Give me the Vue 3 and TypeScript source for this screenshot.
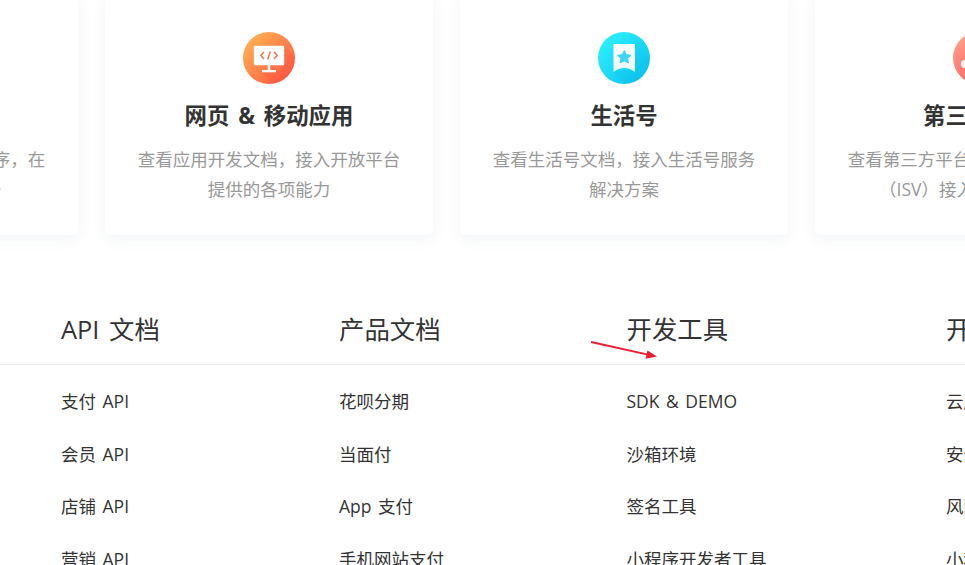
<script setup lang="ts">
interface Card { id: string; title: string; lines: string[] }
interface Col { title: string; items: string[] }
const cards: Card[] = [
  { id: 'mini', title: '小程序', lines: ['查看小程序文档\uFF0C开发小程序\uFF0C在', '支付宝内提供各项服务'] },
  { id: 'web', title: '网页 & 移动应用', lines: ['查看应用开发文档\uFF0C接入开放平台', '提供的各项能力'] },
  { id: 'life', title: '生活号', lines: ['查看生活号文档\uFF0C接入生活号服务', '解决方案'] },
  { id: 'isv', title: '第三方应用', lines: ['查看第三方平台文档\uFF0C帮助开发者', '\uFF08ISV\uFF09接入平台各项能力'] },
]
const cols: Col[] = [
  { title: 'API 文档', items: ['支付 API', '会员 API', '店铺 API', '营销 API'] },
  { title: '产品文档', items: ['花呗分期', '当面付', 'App 支付', '手机网站支付'] },
  { title: '开发工具', items: ['SDK & DEMO', '沙箱环境', '签名工具', '小程序开发者工具'] },
  { title: '开放能力', items: ['云服务', '安全中心', '风险控制', '小程序'] },
]
</script>

<template>
  <div class="page">
    <section class="cards">
      <article v-for="c in cards" :key="c.id" class="card">
        <svg class="icon" viewBox="0 0 52 52" width="52" height="52">
          <defs>
            <linearGradient id="g-web" x1="0" y1="0" x2="1" y2="1">
              <stop offset="0.1" stop-color="#ffb14f" />
              <stop offset="0.9" stop-color="#ff5a48" />
            </linearGradient>
            <linearGradient id="g-life" x1="0" y1="0" x2="1" y2="1">
              <stop offset="0.1" stop-color="#2df0ff" />
              <stop offset="0.9" stop-color="#0cc4ee" />
            </linearGradient>
            <linearGradient id="g-isv" x1="0" y1="0" x2="1" y2="1">
              <stop offset="0.1" stop-color="#ff9e8c" />
              <stop offset="0.9" stop-color="#ff5252" />
            </linearGradient>
            <linearGradient id="g-mini" x1="0" y1="0" x2="1" y2="1">
              <stop offset="0.1" stop-color="#6fb6ff" />
              <stop offset="0.9" stop-color="#2f7dff" />
            </linearGradient>
            <linearGradient id="g-mark" x1="0" y1="0" x2="0" y2="1">
              <stop offset="0.55" stop-color="#fff" />
              <stop offset="1" stop-color="#e2f7fd" />
            </linearGradient>
            <clipPath id="disc"><circle cx="26" cy="26" r="26" /></clipPath>
          </defs>
          <circle cx="26" cy="26" r="26" :fill="`url(#g-${c.id})`" />
          <template v-if="c.id === 'web'">
            <polygon clip-path="url(#disc)" points="40.8,14 64,37 64,64 42,64 19,41 33,41 40.8,34" fill="#e63c28" opacity="0.16" />
            <path d="M10.8 15.2 A1.5 1.5 0 0 1 12.3 13.7 H39.7 A1.5 1.5 0 0 1 41.2 15.2 V31.7 A1.5 1.5 0 0 1 39.7 33.2 H12.3 A1.5 1.5 0 0 1 10.8 31.7 Z" fill="#fff" />
            <rect x="24.8" y="33" width="2.4" height="5.5" fill="#fff" />
            <rect x="19" y="38" width="14" height="2.2" rx="0.6" fill="#fff" />
            <path d="M21 20 L17.8 23.5 L21 27 M31 20 L34.2 23.5 L31 27 M27.3 19.5 L24.7 27.5" fill="none" stroke="#ff7448" stroke-width="1.5" />
          </template>
          <template v-else-if="c.id === 'life'">
            <polygon clip-path="url(#disc)" points="37,12 64,39 64,64 40,64 15.5,40 37,38" fill="#0082c8" opacity="0.06" />
            <path d="M15.5 12 H37 V40 Q26.2 32 15.5 40 Z" fill="url(#g-mark)" />
            <polygon points="26.3,18.5 28.4,22.6 33,23.3 29.7,26.5 30.5,31 26.3,28.9 22.1,31 22.9,26.5 19.6,23.3 24.2,22.6" fill="#3fd6f5" stroke="#3fd6f5" stroke-width="1" stroke-linejoin="round" />
          </template>
          <template v-else-if="c.id === 'isv'">
            <path d="M12 32 L26 16 L40 32 Z" fill="none" stroke="#fff" stroke-width="2" />
            <circle cx="12" cy="32" r="4" fill="#fff" />
            <circle cx="40" cy="32" r="4" fill="#fff" />
            <circle cx="26" cy="16" r="4" fill="#fff" />
          </template>
        </svg>
        <h3 class="card-title">{{ c.title }}</h3>
        <p v-for="l in c.lines" :key="l" class="card-line">{{ l }}</p>
      </article>
    </section>

    <section class="docs">
      <div class="doc-heads">
        <h2 v-for="col in cols" :key="col.title" class="doc-head">{{ col.title }}</h2>
      </div>
      <div class="doc-lists">
        <ul v-for="col in cols" :key="col.title" class="doc-list">
          <li v-for="item in col.items" :key="item">{{ item }}</li>
        </ul>
      </div>
    </section>

    <svg class="arrow" width="70" height="20" viewBox="0 0 70 20">
      <path d="M1 1 L58 13.6" stroke="#ee1c2e" stroke-width="1.8" fill="none" />
      <path d="M67 15.6 L55.5 17.8 L57.5 9.6 Z" fill="#ee1c2e" />
    </svg>
  </div>
</template>

<style>
html, body { margin: 0; background: #fff; overflow: hidden; }
</style>

<style scoped>
.page {
  position: relative;
  width: 965px;
  height: 565px;
  overflow: hidden;
  background: #fff;
  font-family: "Open Sans", "Noto Sans CJK SC", sans-serif;
}
.cards {
  display: flex;
  gap: 27px;
  width: 1400px;
  margin: -6px 0 0 -250px;
}
.card {
  box-sizing: border-box;
  flex: 0 0 328px;
  height: 241px;
  padding-top: 38px;
  background: #fff;
  border-radius: 6px;
  box-shadow: 0 4px 16px rgba(40, 60, 120, 0.06);
  text-align: center;
}
.icon { display: block; margin: 0 auto; }
.card-title {
  margin: 15px 0 11px;
  font-size: 22.4px;
  line-height: 34px;
  font-weight: 700;
  color: #333;
  word-spacing: 3px;
}
.card-line {
  margin: 0;
  font-size: 17.5px;
  line-height: 30px;
  color: #999;
}
.docs { margin-top: 70px; }
.doc-heads, .doc-lists {
  display: grid;
  grid-template-columns: 278px 287.5px 319.5px 1fr;
  padding-left: 61px;
  width: 904px;
}
.doc-heads {
  height: 60px;
  border-bottom: 1px solid #eee;
  width: 965px;
  box-sizing: border-box;
}
.doc-head {
  margin: 0;
  font-size: 25.4px;
  line-height: 48px;
  font-weight: 400;
  color: #333;
  white-space: nowrap;
  word-spacing: 3px;
}
.doc-lists { padding-top: 10px; }
.doc-list {
  margin: 0;
  padding: 0;
  list-style: none;
}
.doc-list li {
  height: 52.7px;
  line-height: 52.7px;
  font-size: 17.5px;
  color: #333;
  white-space: nowrap;
  word-spacing: 2px;
}
.arrow {
  position: absolute;
  left: 590px;
  top: 341px;
}
</style>
